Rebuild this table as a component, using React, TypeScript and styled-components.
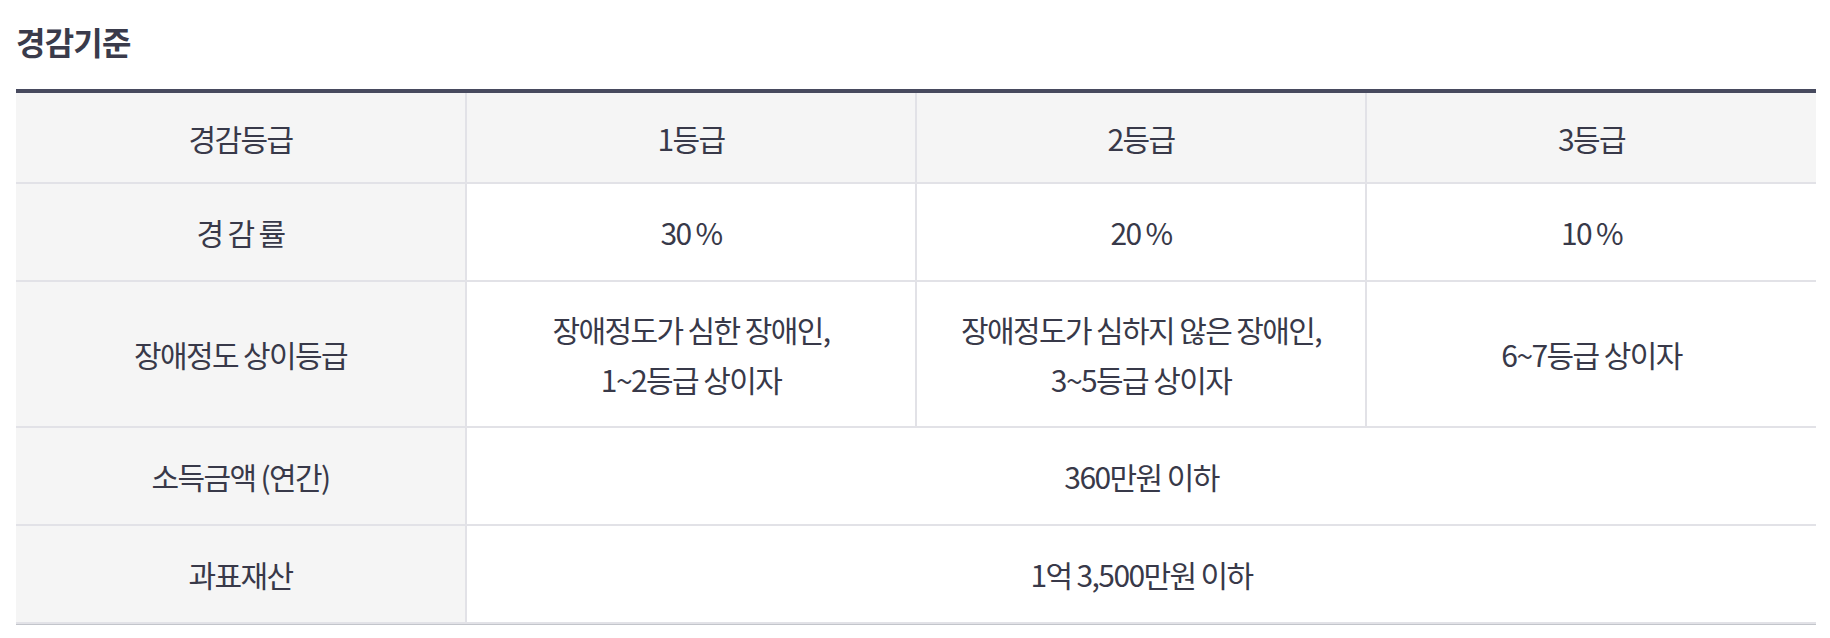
import React from "react";
import styled, { createGlobalStyle } from "styled-components";

const GlobalStyle = createGlobalStyle`
  html, body { margin: 0; padding: 0; background: #ffffff; }
  body {
    font-family: "Noto Sans CJK KR", "Noto Sans", sans-serif;
    color: #3a3b4b;
  }
`;

const Page = styled.div`
  padding: 17px 14px 0 16px;
  width: 1800px;
`;

const Title = styled.h2`
  margin: 0 0 24px;
  font-size: 32px;
  line-height: 48px;
  font-weight: 700;
  letter-spacing: -0.8px;
  color: #3a3b4b;
`;

const TableWrap = styled.div`
  border-top: 4px solid #474a5e;
  border-bottom: 1px solid #c3c5cb;
`;

const Table = styled.table`
  width: 100%;
  border-collapse: collapse;
  table-layout: fixed;
`;

const Row = styled.tr<{ $top: number; $bottom: number }>`
  & > th, & > td {
    padding: ${(p) => p.$top}px 10px ${(p) => p.$bottom}px;
  }
`;

const HeadCell = styled.th`
  background: #f5f5f5;
  border-bottom: 2px solid #e2e2e7;
  border-right: 2px solid #e2e2e7;
  font-size: 30px;
  line-height: 50px;
  font-weight: 400;
  letter-spacing: -1.6px;
  color: #383949;
  text-align: center;
  &:last-child { border-right: none; }
`;

const Cell = styled.td`
  background: #ffffff;
  border-bottom: 2px solid #e2e2e7;
  border-right: 2px solid #e2e2e7;
  font-size: 30px;
  line-height: 50px;
  letter-spacing: -1.6px;
  color: #383949;
  text-align: center;
  &:last-child { border-right: none; }
`;

export default function App() {
  return (
    <>
      <GlobalStyle />
      <Page>
        <Title>경감기준</Title>
        <TableWrap>
          <Table>
            <tbody>
              <Row $top={20} $bottom={19}>
                <HeadCell>경감등급</HeadCell>
                <HeadCell>1등급</HeadCell>
                <HeadCell>2등급</HeadCell>
                <HeadCell>3등급</HeadCell>
              </Row>
              <Row $top={23} $bottom={23}>
                <HeadCell>경 감 률</HeadCell>
                <Cell>30 %</Cell>
                <Cell>20 %</Cell>
                <Cell>10 %</Cell>
              </Row>
              <Row $top={22} $bottom={22}>
                <HeadCell>장애정도 상이등급</HeadCell>
                <Cell>
                  장애정도가 심한 장애인,
                  <br />
                  1~2등급 상이자
                </Cell>
                <Cell>
                  장애정도가 심하지 않은 장애인,
                  <br />
                  3~5등급 상이자
                </Cell>
                <Cell>6~7등급 상이자</Cell>
              </Row>
              <Row $top={23} $bottom={23}>
                <HeadCell>소득금액 (연간)</HeadCell>
                <Cell colSpan={3}>360만원 이하</Cell>
              </Row>
              <Row $top={23} $bottom={23}>
                <HeadCell>과표재산</HeadCell>
                <Cell colSpan={3}>1억 3,500만원 이하</Cell>
              </Row>
            </tbody>
          </Table>
        </TableWrap>
      </Page>
    </>
  );
}
